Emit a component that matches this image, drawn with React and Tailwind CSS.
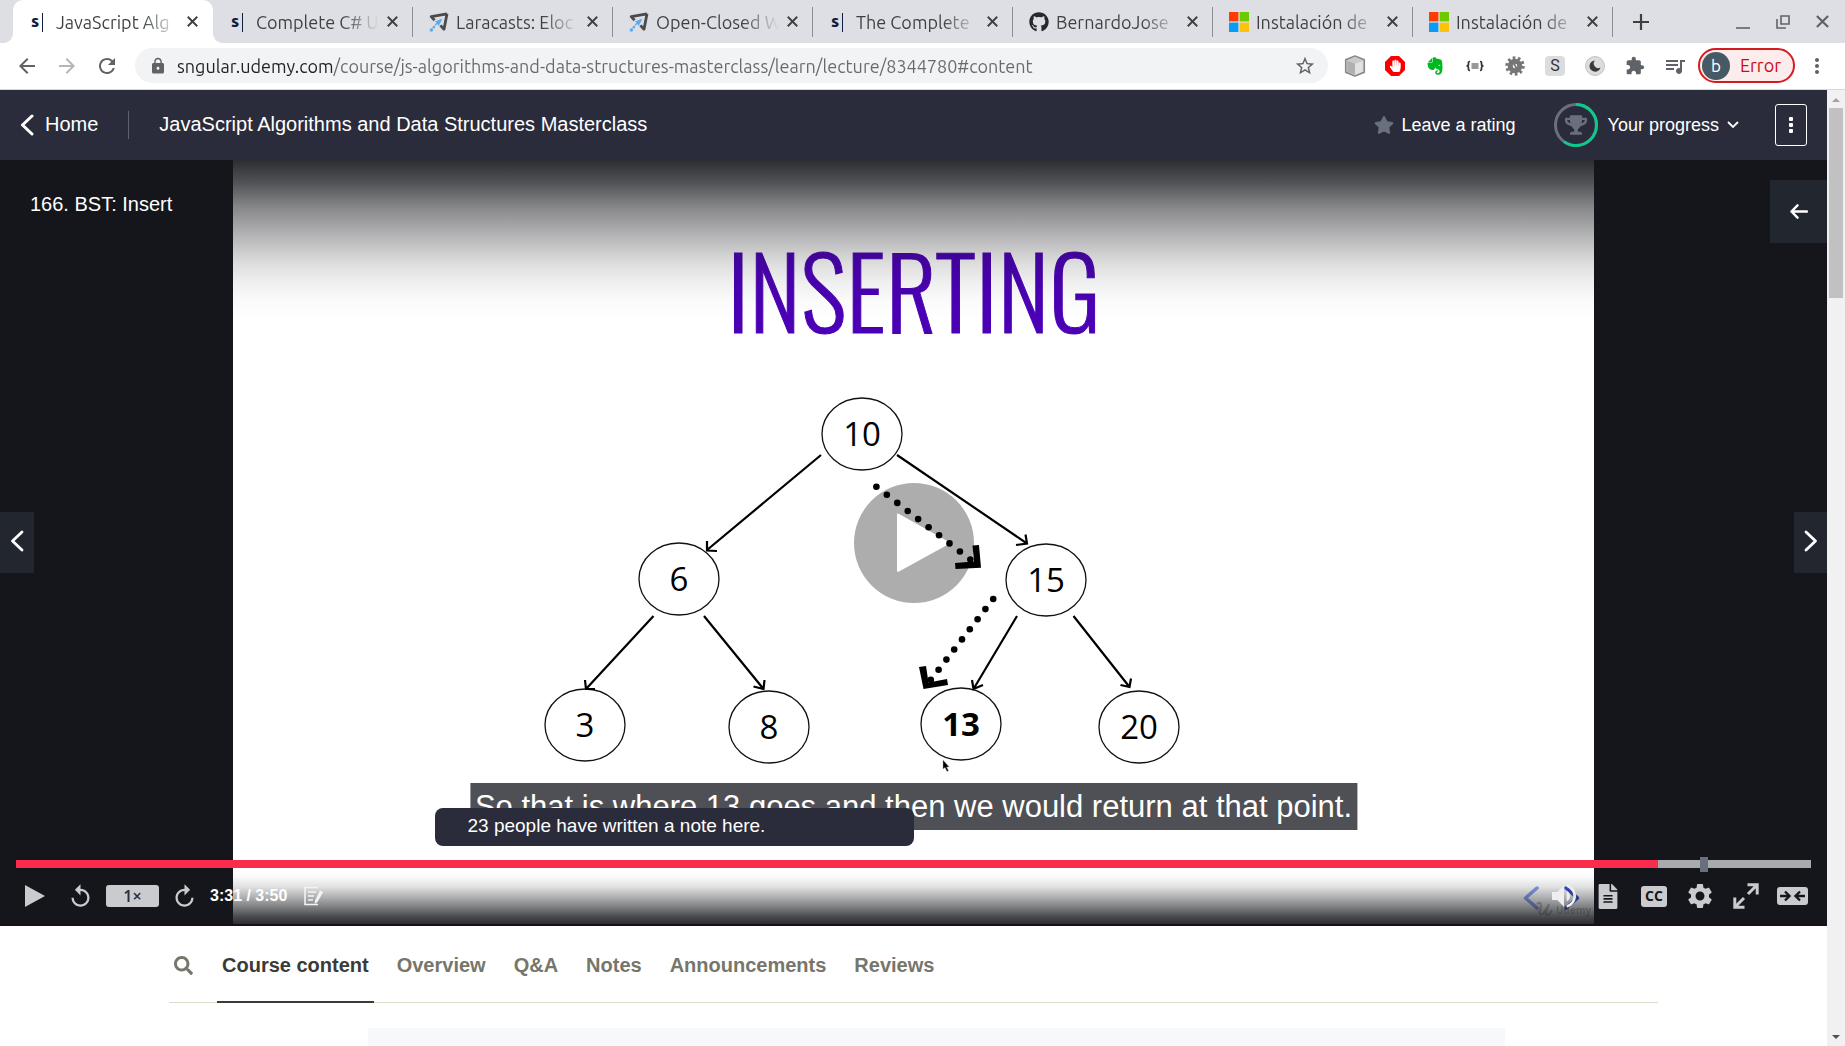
import React, { useState } from "react";
import { FaEvernote, FaGithub, FaStar, FaTrophy, FaHandPaper, FaFileAlt, FaSearch } from "react-icons/fa";
import { MdStarBorder, MdExtension, MdQueueMusic, MdLock, MdRefresh, MdArrowBack, MdArrowForward, MdReplay, MdVolumeUp, MdSettings, MdMoreVert } from "react-icons/md";

/* ---------- favicons ---------- */

function SngularIcon() {
  return (
    <svg viewBox="0 0 20 20" className="size-5">
      <text x="2" y="15" fontSize="17" fontWeight="900" fontFamily="Ubuntu, 'Open Sans', sans-serif" fill="#10203a">s</text>
      <rect x="13" y="1" width="1" height="19" fill="#10203a" />
    </svg>
  );
}

function RocketIcon() {
  return (
    <svg viewBox="0 0 20 20" className="size-5" fill="none">
      <path d="M18 1.800 2.200 4.600l3.400 3.600M18 1.800l-3 15.400-3.600-3.800" stroke="#4a4a4a" strokeWidth="2.800" strokeLinejoin="round" />
      <path d="M13.500 6.500 6 9.500l1.500 1.300-3.500 4.400 4.600-3.200 1.200 2z" fill="#55acee" />
      <circle cx="2.400" cy="18" r="1.700" fill="#55acee" />
      <circle cx="4.800" cy="15.200" r="1.300" fill="#55acee" />
    </svg>
  );
}

function WindowsIcon() {
  return (
    <svg viewBox="0 0 20 20" className="size-5">
      <path d="M0 0h9.400v9.400H0z" fill="#ff3c00" />
      <path d="M10.600 0H20v9.400h-9.400z" fill="#6ccb00" />
      <path d="M0 10.600h9.400V20H0z" fill="#0a9bf5" />
      <path d="M10.600 10.600H20V20h-9.400z" fill="#ffc20a" />
    </svg>
  );
}

const TABS = [
  { title: "JavaScript Alg", icon: <SngularIcon />, active: true },
  { title: "Complete C# U", icon: <SngularIcon /> },
  { title: "Laracasts: Eloc", icon: <RocketIcon /> },
  { title: "Open-Closed W", icon: <RocketIcon /> },
  { title: "The Complete", icon: <SngularIcon /> },
  { title: "BernardoJose", icon: <FaGithub className="size-5 text-[#24292e]" /> },
  { title: "Instalación de", icon: <WindowsIcon /> },
  { title: "Instalación de", icon: <WindowsIcon /> },
];

function Cross({ className }) {
  return (
    <svg viewBox="0 0 10 10" className={className} fill="none" stroke="currentColor">
      <path d="M.7.7l8.600 8.600M9.300.7L.7 9.300" strokeWidth="1.700" />
    </svg>
  );
}

function BrowserTab({ tab }) {
  return (
    <div className={tab.active ? "relative flex h-full w-50 items-center rounded-t-[10px] bg-white pl-4" : "flex h-full w-50 items-center pl-4"}>
      {tab.active && (
        <>
          <span className="absolute bottom-0 -left-2.5 size-2.5 bg-[radial-gradient(circle_at_0_0,#dedfe4_70%,#ffffff_72%)]" />
          <span className="absolute -right-2.5 bottom-0 size-2.5 bg-[radial-gradient(circle_at_100%_0,#dedfe4_70%,#ffffff_72%)]" />
        </>
      )}
      <span className="flex w-5 shrink-0 justify-center">{tab.icon}</span>
      <span className="ml-[7px] w-[123px] overflow-hidden whitespace-nowrap bg-linear-to-r from-[#3c4043] from-70% to-transparent to-100% bg-clip-text text-[18px] leading-6 text-transparent">{tab.title}</span>
      <button aria-label={"Close " + tab.title} className="ml-2 text-[#3c4043]"><Cross className="size-[11px]" /></button>
      {!tab.active && <span className="ml-3.5 h-[30px] w-px shrink-0 bg-[#8d9095]" />}
    </div>
  );
}

function TabStrip() {
  return (
    <div className="flex h-[43px] items-center bg-[#dedfe4] pl-[13px] text-[#3c4043]">
      {TABS.map((tab, i) => <BrowserTab key={i} tab={tab} />)}
      <button aria-label="New tab" className="ml-5">
        <svg viewBox="0 0 16 16" className="size-4" stroke="currentColor" strokeWidth="2.200"><path d="M8 0v16M0 8h16" /></svg>
      </button>
      <div className="ml-auto flex items-center gap-6.5 pr-4 text-[#5f6368]">
        <button aria-label="Minimize"><svg viewBox="0 0 14 14" className="size-3.5" stroke="currentColor" strokeWidth="1.600"><path d="M0 13h14" /></svg></button>
        <button aria-label="Restore"><svg viewBox="0 0 14 14" className="size-3.5" fill="none" stroke="currentColor" strokeWidth="1.600"><path d="M5 1h8v8H5zM1 4v9h9" /></svg></button>
        <button aria-label="Close window"><Cross className="size-[13px]" /></button>
      </div>
    </div>
  );
}

/* ---------- address bar ---------- */

const EXTENSIONS = [
  ["Cube", <svg viewBox="0 0 20 20" className="size-5.5 shrink-0"><path d="M10 .8l8.500 3.500v11.400L10 19.200l-8.500-3.500V4.300z" fill="#c9c9c9" stroke="#858585" strokeWidth="1.300" strokeLinejoin="round" /><path d="M3 5.500l7 2.500v9.800l-7-2.800z" fill="#b0b0b0" /><path d="M10 8l7-2.500V15l-7 2.800z" fill="#e2e2e2" /></svg>],
  ["Blocker", <svg viewBox="0 0 20 20" className="size-5"><path d="M6 0h8l6 6v8l-6 6H6l-6-6V6z" fill="#f70000" /><g transform="translate(4 3.500)"><FaHandPaper size="12.500" color="#fff" /></g></svg>],
  ["Evernote", <FaEvernote className="size-5 text-[#00b81f]" />],
  ["JSON", <svg viewBox="0 0 20 20" className="size-5" fill="none" stroke="#333"><path d="M5 5.500c-2 0-1.500 1.200-1.500 2.500S3 10 1.500 10c1.500 0 2 .8 2 2s-.5 2.500 1.500 2.500M15 5.500c2 0 1.500 1.200 1.500 2.500s.5 2 2 2c-1.500 0-2 .8-2 2s.5 2.500-1.500 2.500" strokeWidth="1.700" /><path d="M6.500 8h7M6.500 10h7M6.500 12h7" strokeWidth="1" /></svg>],
  ["Gear", <svg viewBox="0 0 20 20" className="size-5"><circle cx="10" cy="10" r="8" fill="none" stroke="#767676" strokeWidth="3.500" strokeDasharray="2.600 2.430" /><circle cx="10" cy="10" r="4.800" fill="none" stroke="#767676" strokeWidth="5" /><path d="M8.500 7l3.500 6" stroke="#767676" strokeWidth="1.800" fill="none" /></svg>],
  ["S", <span className="flex size-5 items-center justify-center rounded-sm bg-[#dcdcdc] font-[Roboto,sans-serif] text-base leading-5 text-[#333]">S</span>],
  ["Moon", <svg viewBox="0 0 20 20" className="size-5"><circle cx="10" cy="10" r="9.500" fill="#dcdcdc" stroke="#c4c4c4" /><path d="M10 4.500a4.500 4.500 0 0 0 5.500 7 5.600 5.600 0 1 1-5.500-7z" fill="#3a3a3a" /></svg>],
  ["Extensions", <MdExtension className="size-5 text-[#5f6368]" />],
  ["Media", <MdQueueMusic className="size-6 shrink-0 text-[#5f6368]" />],
];

function Toolbar() {
  return (
    <div className="flex h-[47px] items-center border-b border-[#d5d8dc] bg-white pr-4 pb-px">
      <div className="flex w-[135px] shrink-0 items-center gap-4 pl-[15px] text-[#5f6368]">
        <button aria-label="Back"><MdArrowBack className="size-6" /></button>
        <button aria-label="Forward" className="text-[#b4b7ba]"><MdArrowForward className="size-6" /></button>
        <button aria-label="Reload"><MdRefresh className="size-6" /></button>
      </div>
      <div className="flex h-[35px] min-w-0 flex-1 items-center rounded-full bg-[#f1f3f4] pr-3 pl-3.5 text-[#5f6368]">
        <MdLock className="mr-2.5 size-[18px] shrink-0" />
        <input
          aria-label="Address"
          readOnly
          value="sngular.udemy.com/course/js-algorithms-and-data-structures-masterclass/learn/lecture/8344780#content"
          className="min-w-0 flex-1 bg-linear-to-r from-[#202124] from-[156px] to-[#66696d] to-[156px] bg-clip-text text-[18px] leading-6 text-transparent outline-none"
        />
        <button aria-label="Bookmark"><MdStarBorder className="size-[22px]" /></button>
      </div>
      <div className="ml-[17px] flex items-center gap-5">
        {EXTENSIONS.map(([name, icon]) => (
          <button key={name} aria-label={name} className="flex w-5 items-center justify-center">{icon}</button>
        ))}
      </div>
      <button className="ml-[13px] flex h-[35px] items-center gap-2.5 rounded-full border-2 border-[#d61a1f] bg-[#fdecec] pr-3 pl-0.5 text-[18px] text-[#cc0c14]">
        <span className="flex size-7 items-center justify-center rounded-full bg-[#455a64] text-[17px] text-white">b</span>
        Error
      </button>
      <button aria-label="Browser menu" className="ml-2.5 text-[#5f6368]"><MdMoreVert className="size-6" /></button>
    </div>
  );
}

/* ---------- course header ---------- */

function Chevron({ className, width = 3, dir = "left" }) {
  return (
    <svg viewBox="0 0 14 22" className={className} fill="none" stroke="currentColor" strokeWidth={width} strokeLinecap="round" strokeLinejoin="round">
      <path d={dir === "left" ? "M12 2 2.500 11 12 20" : "M2 2l9.500 9L2 20"} />
    </svg>
  );
}

function CourseHeader() {
  return (
    <header className="flex h-[70px] items-center bg-[#2a2c3b] pr-5 pl-5 text-white">
      <a href="#home" className="flex items-center gap-[11px] text-xl">
        <Chevron className="h-[22px] w-3.5" />
        <span className="pb-0.5">Home</span>
      </a>
      <span className="ml-[30px] h-7 w-px bg-[#5f616e]" />
      <h1 className="ml-[30px] pb-0.5 text-xl">JavaScript Algorithms and Data Structures Masterclass</h1>
      <button className="ml-auto flex items-center gap-2 text-[18px]">
        <FaStar className="size-5 text-[#6a6f7c]" />
        Leave a rating
      </button>
      <button className="ml-[38px] flex items-center gap-2.5 text-[18px]">
        <span className="relative flex size-11 items-center justify-center">
          <svg viewBox="0 0 44 44" className="absolute size-11 -rotate-90" fill="none" strokeWidth="3">
            <circle cx="22" cy="22" r="20.500" stroke="#6a6f7c" />
            <circle cx="22" cy="22" r="20.500" stroke="#0cca8b" pathLength="100" strokeDasharray="60 40" />
          </svg>
          <FaTrophy className="size-[22px] text-[#6a6f7c]" />
        </span>
        Your progress
        <svg viewBox="0 0 12 8" className="-ml-0.5 h-2 w-3" fill="none" stroke="currentColor" strokeWidth="1.800"><path d="M1 1l5 5 5-5" /></svg>
      </button>
      <button aria-label="More options" className="ml-9 flex h-[42px] w-8 items-center justify-center rounded-[3px] border border-white">
        <svg viewBox="0 0 4 16" className="h-4 w-1" fill="currentColor"><rect width="4" height="4" rx="1" /><rect y="6" width="4" height="4" rx="1" /><rect y="12" width="4" height="4" rx="1" /></svg>
      </button>
    </header>
  );
}

/* ---------- lecture slide ---------- */

const NODES = [
  [862, 434, "10"],
  [679, 579, "6"],
  [1046, 580, "15"],
  [585, 725, "3"],
  [769, 727, "8"],
  [961, 724, "13"],
  [1139, 727, "20"],
];

const EDGES = [
  "M821 455 707 550M707 541v9.500l10 .5",
  "M897 455 1027 543.500M1025.500 534.500l1.500 9-11 1.500",
  "M653.500 616 586 689M585 680l1 9h9",
  "M704 616l59.500 73M764.500 680l-1 9-10-2.500",
  "M1017 616l-43.500 73M972 680l1.500 9 9.500-4",
  "M1073.500 616l56 71M1131 678.500l-1.500 8.500-9-2",
];

function Slide() {
  return (
    <svg viewBox="233 160 1361 766" className="block h-full w-auto bg-white" role="img" aria-label="Binary search tree with 13 inserted">
      <text x="914" y="333" textAnchor="middle" fontFamily="Oswald, 'Open Sans Condensed', sans-serif" fontWeight="300" fontSize="99" fill="#4b00b5" stroke="#4b00b5">INSERTING</text>
      {NODES.map(([x, y, label]) => (
        <g key={label}>
          <ellipse cx={x} cy={y} rx="40" ry="36" fill="#fff" stroke="#111" strokeWidth="1.300" />
          <text x={x} y={y + 12} textAnchor="middle" fontFamily="'Open Sans', 'Noto Sans', sans-serif" fontSize="33" fontWeight={label === "13" ? 700 : 400}>{label}</text>
        </g>
      ))}
      <path d={EDGES.join("")} fill="none" stroke="#000" strokeWidth="2.200" />
      {Array.from({ length: 10 }, (_, i) => <circle key={i} cx={876.4 + i * 10.44} cy={486.7 + i * 8.1} r="3.300" />)}
      <path d="M972.500 545.500 979 545l2 22.700-25.500 1.300-.5-6 19-1.500z" />
      {Array.from({ length: 9 }, (_, i) => <circle key={i} cx={993.2 - i * 7.8} cy={599 + i * 10.1} r="3.300" />)}
      <path d="M919 667l7-1 2.500 16.500L947 679l1 6-24.500 4z" />
      <path d="M943 760v9l2-1.500 2 4 1.500-.8-1.900-3.700h2.600z" fill="#000" stroke="#b9a9c4" strokeWidth=".4" />
      <g fill="none" strokeWidth="3.500" strokeLinecap="round" strokeLinejoin="round">
        <path d="M1537 888l-11.500 10 11.500 10" stroke="#86a2f0" />
        <path d="M1566 888l11.500 10-11.500 10" stroke="#3a4fd0" />
      </g>
      <g opacity=".3">
        <path d="M1537 904c4-3 5 0 3 6-2 5 2 6 5 1l4-7-3 8c-1 4 3 4 6-2" fill="none" stroke="#444" strokeWidth="2.200" />
        <text x="1556" y="914" fontFamily="'Open Sans', sans-serif" fontWeight="700" fontSize="10" fill="#444">Udemy</text>
      </g>
    </svg>
  );
}

/* ---------- player ---------- */

function SeekBar() {
  const [value, setValue] = useState(91.5);
  return (
    <div className="relative flex h-4 items-center">
      <input
        type="range"
        aria-label="Seek"
        min="0"
        max="100"
        step="0.1"
        value={value}
        onChange={(e) => setValue(Number(e.target.value))}
        className="h-2 w-full appearance-none [&::-webkit-slider-thumb]:size-0 [&::-webkit-slider-thumb]:appearance-none"
        style={{ backgroundImage: `linear-gradient(to right, #f92c4b ${value}%, #a9aaae ${value}%)` }}
      />
      <span className="absolute left-[93.8%] h-[15px] w-2 bg-[#6a6f7c]" />
    </div>
  );
}

function Controls() {
  return (
    <div className="flex h-[34px] items-center pr-[3px] pl-[3px] text-[#cacbce]">
      <button aria-label="Play" className="w-[30px]">
        <svg viewBox="0 0 20 22" className="ml-1.5 h-[22px] w-5" fill="currentColor"><path d="M0 0l20 11L0 22z" /></svg>
      </button>
      <button aria-label="Rewind 5 seconds" className="ml-4.5"><MdReplay className="size-[27px]" /></button>
      <button className="ml-3 h-[22px] w-[53px] rounded-[3px] bg-[#cacbce] font-['Open_Sans',sans-serif] text-base leading-[22px] font-semibold text-[#2a2c3b]">1×</button>
      <button aria-label="Forward 5 seconds" className="ml-3"><MdReplay className="size-[27px] -scale-x-100" /></button>
      <span className="ml-3 text-base font-bold text-white">3:31 / 3:50</span>
      <button aria-label="Add note" className="ml-[17px]">
        <svg viewBox="0 0 20 20" className="size-5" fill="none" stroke="#f3f3f4" strokeWidth="1.600"><path d="M14 1.500H1v17h13M4 6h8M4 10h6M4 14h5" /><path d="M19.200 6 13.500 16l-2.800 2 .2-3.200L16 4.500z" fill="#f3f3f4" stroke="none" /></svg>
      </button>
      <div className="ml-auto flex items-center">
        <button aria-label="Volume" className="text-[#eeeef0]"><MdVolumeUp className="size-[32px]" /></button>
        <button aria-label="Transcript" className="ml-4 flex w-6 justify-center"><FaFileAlt className="size-[25px]" /></button>
        <button aria-label="Captions" className="ml-[21px] flex h-[21px] w-[26px] items-center justify-center rounded-[3px] bg-[#cacbce] font-['Open_Sans',sans-serif] text-sm font-bold text-[#15161b]">CC</button>
        <button aria-label="Settings" className="ml-[18px]"><MdSettings className="size-[30px]" /></button>
        <button aria-label="Fullscreen" className="ml-[18px]">
          <svg viewBox="0 0 26 26" className="size-[26px]" fill="none" stroke="currentColor" strokeWidth="3"><path d="M14.500 1.800h9.700v9.700M24 2l-9 9M11.500 24.200H1.800v-9.700M2 24l9-9" /></svg>
        </button>
        <button aria-label="Expanded view" className="ml-[18px]">
          <svg viewBox="0 0 31 18" className="h-[18px] w-[31px]"><rect width="31" height="18" rx="3" fill="currentColor" /><path d="M3 9h9M8 4.500 12.500 9 8 13.500M28 9h-9M23 4.500 18.500 9l4.500 4.500" fill="none" stroke="#15161b" strokeWidth="2.400" /></svg>
        </button>
      </div>
    </div>
  );
}

function Player() {
  return (
    <section className="relative flex h-[766px] justify-center overflow-hidden bg-[#15161b] text-white">
      <Slide />
      <div className="absolute inset-x-0 top-0 h-40 bg-[linear-gradient(to_bottom,rgb(21_22_27/.9),rgb(21_22_27/.74)_14%,rgb(21_22_27/.52)_29%,rgb(21_22_27/.39)_41%,rgb(21_22_27/.25)_54%,rgb(21_22_27/.14)_65%,rgb(21_22_27/.07)_76%,rgb(21_22_27/.02)_88%,transparent)]" />
      <div className="absolute inset-x-0 bottom-0 h-14 border-b-2 border-[#1d0d16] bg-[linear-gradient(to_top,rgb(21_22_27/.9),rgb(21_22_27/.77)_14%,rgb(21_22_27/.54)_32%,rgb(21_22_27/.32)_51%,rgb(21_22_27/.12)_70%,rgb(21_22_27/.02)_88%,transparent)]" />
      <h2 className="absolute top-[30px] left-[30px] text-xl">166. BST: Insert</h2>
      <button aria-label="Open sidebar" className="absolute top-5 right-0 flex h-[63px] w-[57px] items-center justify-center bg-[#22262f]">
        <svg viewBox="0 0 18 15" className="h-[15px] w-[18px]" fill="none" stroke="currentColor" strokeWidth="2.400" strokeLinecap="round" strokeLinejoin="round"><path d="M17 7.500H1.500M7.500 1.300l-6 6.200 6 6.200" /></svg>
      </button>
      <button aria-label="Previous lecture" className="absolute top-[352px] left-0 flex h-[61px] w-[34px] items-center justify-center bg-[#22262f] pb-1"><Chevron className="h-[22px] w-3.5" width={2.8} /></button>
      <button aria-label="Next lecture" className="absolute top-[352px] right-0 flex h-[61px] w-[33px] items-center justify-center bg-[#22262f] pb-1"><Chevron dir="right" className="h-[22px] w-3.5" width={2.8} /></button>
      <button aria-label="Play video" className="absolute top-[323px] left-1/2 size-30 -translate-x-1/2 rounded-full">
        <svg viewBox="0 0 120 120" className="size-30"><path fillRule="evenodd" fill="#000" fillOpacity=".32" d="M60 0a60 60 0 1 0 0 120A60 60 0 1 0 60 0zM43 31.500Q43 30 45 31L95 59q1.500 1 0 2L45 88.500q-2 1-2-1z" /></svg>
      </button>
      <p className="absolute top-[623px] left-1/2 -translate-x-1/2 bg-[#4f5055] px-[5px] text-[31px] leading-[47px] whitespace-nowrap">So that is where 13 goes and then we would return at that point.</p>
      <p className="absolute top-[648px] right-1/2 h-[38px] w-[479px] rounded-lg bg-[#2a2c3b] pl-[33px] text-[19px] leading-[36px]">23 people have written a note here.</p>
      <div className="absolute inset-x-4 top-[696px]">
        <SeekBar />
        <div className="mt-[7px]"><Controls /></div>
      </div>
    </section>
  );
}

/* ---------- course tabs ---------- */

function CourseTabs() {
  return (
    <section className="flex-1 bg-white px-[169px] text-xl font-bold text-[#76766b]">
      <nav className="flex h-[77px] items-stretch gap-[18px] border-b border-[#dcdccb]">
        <button aria-label="Search" className="mr-1.5 flex items-center pt-0.5 pl-[5px]"><FaSearch className="size-[19px]" /></button>
        {["Course content", "Overview", "Q&A", "Notes", "Announcements", "Reviews"].map((name, i) => (
          <a key={name} href={"#tab" + i} className={i === 0 ? "-mb-px flex items-center border-b-2 border-[#3c3b37] px-[5px] pt-0.5 text-[#3a3b37]" : "flex items-center px-[5px] pt-0.5"}>{name}</a>
        ))}
      </nav>
      <div className="mt-[25px] mr-[153px] ml-[199px] h-full bg-[#f7f8fa]" />
    </section>
  );
}

function Scrollbar() {
  return (
    <div className="flex w-[18px] shrink-0 flex-col items-center bg-[#f1f1f1]">
      <svg viewBox="0 0 18 18" className="size-[18px]"><path d="M5 12l4-4 4 4z" fill="#a3a3a3" /></svg>
      <span className="h-[190px] w-3.5 bg-[#c1c1c1]" />
      <svg viewBox="0 0 18 18" className="mt-auto size-[18px]"><path d="M5 7l4 4 4-4z" fill="#505050" /></svg>
    </div>
  );
}

export default function App() {
  return (
    <div className="flex h-screen flex-col overflow-hidden bg-white">
      <div className="shrink-0 font-[Ubuntu,'Open_Sans',sans-serif]">
        <TabStrip />
        <Toolbar />
      </div>
      <div className="flex min-h-0 flex-1">
        <main className="flex min-w-0 flex-1 flex-col overflow-hidden font-['Liberation_Sans',Arial,sans-serif]">
          <div className="shrink-0">
            <CourseHeader />
            <Player />
          </div>
          <CourseTabs />
        </main>
        <Scrollbar />
      </div>
    </div>
  );
}
